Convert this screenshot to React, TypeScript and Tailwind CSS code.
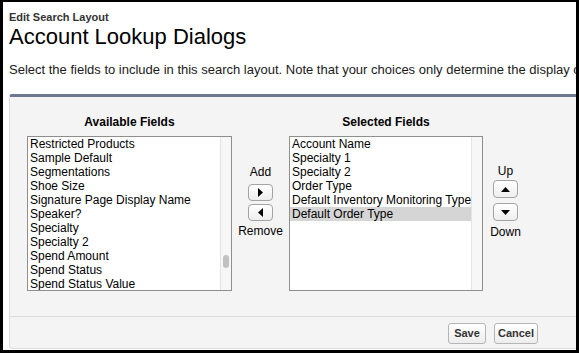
import React from "react";

const available = [
  "Restricted Products",
  "Sample Default",
  "Segmentations",
  "Shoe Size",
  "Signature Page Display Name",
  "Speaker?",
  "Specialty",
  "Specialty 2",
  "Spend Amount",
  "Spend Status",
  "Spend Status Value",
];

const selected = [
  "Account Name",
  "Specialty 1",
  "Specialty 2",
  "Order Type",
  "Default Inventory Monitoring Type",
  "Default Order Type",
];

function Tri({ dir }: { dir: "left" | "right" | "up" | "down" }) {
  const pts =
    dir === "right"
      ? "2,0 7,4.5 2,9"
      : dir === "left"
      ? "7,0 2,4.5 7,9"
      : dir === "up"
      ? "0,7 4.5,2 9,7"
      : "0,2 4.5,7 9,2";
  return (
    <svg width="9" height="9" viewBox="0 0 9 9">
      <polygon points={pts} fill="#000" />
    </svg>
  );
}

function ArrowBtn({ dir, h }: { dir: "left" | "right" | "up" | "down"; h: string }) {
  return (
    <div
      className={`w-[25px] ${h} flex items-center justify-center rounded-[4px] border border-[#a3a3a3] bg-gradient-to-b from-white to-[#eeeeee]`}
    >
      <Tri dir={dir} />
    </div>
  );
}

function ListBox({
  items,
  width,
  highlight,
  thumb,
}: {
  items: string[];
  width: string;
  highlight?: number;
  thumb?: boolean;
}) {
  return (
    <div className={`${width} h-[155px] border border-[#8f8f8f] bg-white flex overflow-hidden`}>
      <div className="flex-1 min-w-0 overflow-hidden">
        {items.map((t, i) => (
          <div
            key={t}
            className={`h-[14px] leading-[14px] pl-[2px] text-[12px] text-black whitespace-nowrap ${
              i === highlight ? "bg-[#d5d5d5]" : ""
            }`}
          >
            {t}
          </div>
        ))}
      </div>
      <div className="w-[11px] h-full bg-[#f7f7f7] border-l border-[#e4e4e4] flex flex-col items-center">
        {thumb && <div className="mt-[118px] w-[6px] h-[13px] rounded-full bg-[#c1c1c1]" />}
      </div>
    </div>
  );
}

export default function App() {
  return (
    <div
      className="w-[579px] h-[353px] overflow-hidden bg-white border-black border-l-[3px] border-r-[3px] border-t-2 border-b-[3px] pl-[6px]"
      style={{ fontFamily: '"Liberation Sans", Arial, Helvetica, sans-serif' }}
    >
      <div className="pt-[9px] text-[11px] leading-[13px] font-bold text-[#333333]">Edit Search Layout</div>
      <div className="text-[22px] leading-[26px] text-black">Account Lookup Dialogs</div>
      <div className="mt-[12px] text-[13px] leading-[16px] text-[#1a1a1a] whitespace-nowrap overflow-hidden">
        Select the fields to include in this search layout. Note that your choices only determine the display o
      </div>
      <div className="mt-[16px] w-[580px] bg-[#f4f4f4] border-t-[3px] border-t-[#6b7890] border-l border-b border-[#dddddd] rounded-t-[3px] rounded-b-[4px]">
        <div className="pt-[18px] pb-[25px] pl-[17px] flex items-start">
          <div className="flex flex-col">
            <div className="h-[14px] leading-[14px] mb-[7px] text-center text-[12px] font-bold text-black">
              Available Fields
            </div>
            <ListBox items={available} width="w-[205px]" thumb />
          </div>
          <div className="w-[57px] pt-[50px] flex flex-col items-center">
            <div className="h-[14px] leading-[14px] text-[12px] text-black">Add</div>
            <div className="mt-[5px] flex flex-col gap-[3px]">
              <ArrowBtn dir="right" h="h-[17px]" />
              <ArrowBtn dir="left" h="h-[17px]" />
            </div>
            <div className="h-[14px] leading-[14px] mt-[3px] text-[12px] text-black">Remove</div>
          </div>
          <div className="flex flex-col">
            <div className="h-[14px] leading-[14px] mb-[7px] text-center text-[12px] font-bold text-black">
              Selected Fields
            </div>
            <ListBox items={selected} width="w-[194px]" highlight={5} />
          </div>
          <div className="ml-[10px] w-[25px] pt-[49px] flex flex-col items-center">
            <div className="h-[14px] leading-[14px] text-[12px] text-black">Up</div>
            <div className="mt-[2px] flex flex-col gap-[5px]">
              <ArrowBtn dir="up" h="h-[18px]" />
              <ArrowBtn dir="down" h="h-[18px]" />
            </div>
            <div className="h-[14px] leading-[14px] mt-[4px] text-[12px] text-black">Down</div>
          </div>
        </div>
        <div className="border-t border-[#dcdcdc] pt-[6px] pb-[4px] pl-[438px] flex gap-[8px]">
          <div className="w-[38px] h-[21px] flex items-center justify-center rounded-[3px] border border-[#b5b5b5] bg-gradient-to-b from-white to-[#ededed] text-[11px] font-bold text-[#333333]">
            Save
          </div>
          <div className="w-[44px] h-[21px] flex items-center justify-center rounded-[3px] border border-[#b5b5b5] bg-gradient-to-b from-white to-[#ededed] text-[11px] font-bold text-[#333333]">
            Cancel
          </div>
        </div>
      </div>
    </div>
  );
}
